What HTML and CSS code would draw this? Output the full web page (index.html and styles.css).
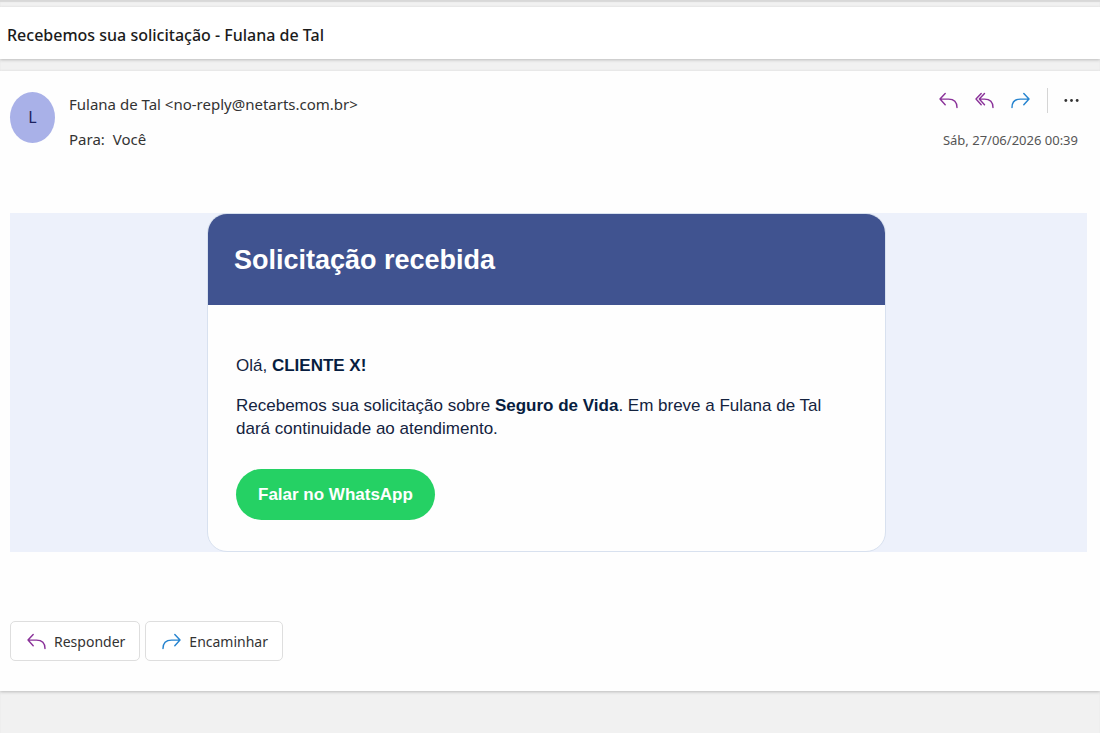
FILE: index.html
```html
<!DOCTYPE html>
<html lang="pt-BR">
<head>
    <meta charset="UTF-8">
    <meta name="viewport" content="width=device-width, initial-scale=1.0">
    <title>Recebemos sua solicitação - Fulana de Tal</title>
    <link rel="stylesheet" href="styles.css">
</head>
<body>
    <!-- shared arrow shapes -->
    <svg class="symbols" aria-hidden="true">
        <symbol id="reply" viewBox="0 0 20 18">
            <path d="M6.500 1.500 1 7.500l5.500 6M1 7.500h9c6 0 9 3 9 9"/>
        </symbol>
        <symbol id="reply-all" viewBox="0 0 20 18">
            <path d="M6.500 1.500 1 7.500l5.500 6M10 1.500 4.500 7.500l5.500 6M4.500 7.500H10c6 0 9 3 9 9"/>
        </symbol>
        <symbol id="forward" viewBox="0 0 20 18">
            <path d="m13.500 1.500 5.500 6-5.500 6M19 7.500h-9c-6 0-9 3-9 9"/>
        </symbol>
    </svg>

    <header class="subject">
        <h1>Recebemos sua solicitação - Fulana de Tal</h1>
    </header>

    <main class="message">
        <div class="message-head">
            <div class="avatar">L</div>
            <div class="people">
                <p>Fulana de Tal &lt;no-reply@netarts.com.br&gt;</p>
                <p>Para: <span class="recipient">Você</span></p>
            </div>
            <div class="meta">
                <div class="actions">
                    <button class="icon-button purple" aria-label="Responder"><svg><use href="#reply"/></svg></button>
                    <button class="icon-button purple" aria-label="Responder a todos"><svg><use href="#reply-all"/></svg></button>
                    <button class="icon-button blue" aria-label="Encaminhar"><svg><use href="#forward"/></svg></button>
                    <span class="divider"></span>
                    <button class="icon-button more" aria-label="Mais ações">
                        <svg viewBox="0 0 20 18"><circle cx="4" cy="9" r="1.500"/><circle cx="10" cy="9" r="1.500"/><circle cx="16" cy="9" r="1.500"/></svg>
                    </button>
                </div>
                <time datetime="2026-06-27T00:39">Sáb, 27/06/2026 00:39</time>
            </div>
        </div>

        <div class="email">
            <div class="card">
                <h2>Solicitação recebida</h2>
                <div class="card-body">
                    <p>Olá, <strong>CLIENTE X!</strong></p>
                    <p>Recebemos sua solicitação sobre <strong>Seguro de Vida</strong>. Em breve a Fulana de Tal dará continuidade ao atendimento.</p>
                    <a class="whatsapp" href="#">Falar no WhatsApp</a>
                </div>
            </div>
        </div>

        <div class="footer-actions">
            <button class="purple"><svg><use href="#reply"/></svg>Responder</button>
            <button class="blue"><svg><use href="#forward"/></svg>Encaminhar</button>
        </div>
    </main>
</body>
</html>
```
FILE: styles.css
```css
* { box-sizing: border-box; }
body { margin: 0; padding-top: 7px; min-height: 100vh; background: #f1f1f1; color: #333; font-family: "Segoe UI", "Noto Sans", sans-serif; font-size: 15px; box-shadow: inset 0 2px 1px #d8d8d8; }
h1, h2, p { margin: 0; }
button { font-family: inherit; cursor: pointer; }
svg { width: 19px; height: 17px; fill: none; stroke: currentColor; stroke-width: 1.5; stroke-linecap: round; stroke-linejoin: round; flex: none; }
.symbols { position: absolute; width: 0; height: 0; }

.subject { padding: 16px 7px 12px; background: #fff; box-shadow: 0 1px 3px #bbb; }
.subject h1 { font-size: 16px; line-height: 24px; font-weight: 500; color: #1b1b1b; }

.message { margin-top: 12px; padding: 21px 13px 30px 10px; background: #fefefe; box-shadow: 0 1px 3px #bbb; }
.message-head { display: flex; gap: 14px; height: 121px; }
.avatar { width: 45px; height: 51px; border-radius: 50%; background: #a9b1e8; color: #1c2260; font-size: 16px; line-height: 51px; text-align: center; }
.people { flex: 1; }
.people p { line-height: 24px; margin-bottom: 11px; }
.recipient { margin-left: 4px; }
.meta { padding-right: 9px; text-align: right; }
.meta time { color: #555; font-size: 13px; line-height: 20px; }
.actions { display: flex; justify-content: flex-end; align-items: center; gap: 17px; height: 17px; margin-bottom: 20px; }
.purple svg { color: #8a3299; }
.blue svg { color: #2583cf; }
.icon-button { display: flex; padding: 0; border: 0; background: none; }
.more { margin: 0 -3px; }
.more svg { fill: #333; stroke: none; }
.divider { width: 1px; height: 25px; background: #d5d5d5; }

.email { padding-right: 4px; background: #edf1fb; font-family: Arial, "Liberation Sans", sans-serif; }
.card { max-width: 679px; margin: 0 auto; border: 1px solid #d8e1ef; border-radius: 20px; background: #fefefe; overflow: hidden; }
.card h2 { padding: 28px 26px 27px; background: #405390; color: #fff; font-size: 27px; line-height: 36px; }
.card-body { padding: 49px 28px 31px; color: #14233f; font-size: 17px; line-height: 23px; }
.card-body p { max-width: 600px; margin-bottom: 17px; }
.card-body strong { color: #071d40; }
.whatsapp { display: inline-block; margin-top: 12px; padding: 14px 22px; border-radius: 26px; background: #25d164; color: #fff; font-weight: bold; text-decoration: none; }

.footer-actions { display: flex; gap: 5px; margin-top: 69px; }
.footer-actions button { display: flex; align-items: center; gap: 8px; height: 40px; padding: 0 14px 0 16px; border: 1px solid #dedede; border-radius: 5px; background: #fff; color: #333; font-size: 14px; }
```
